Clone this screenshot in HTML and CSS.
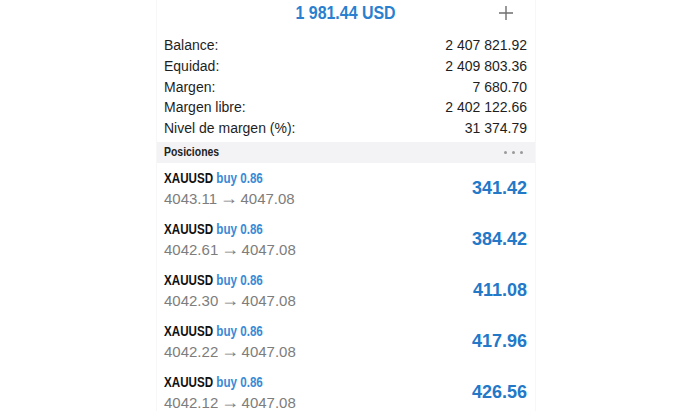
FILE: index.html
```html
<!DOCTYPE html>
<html lang="es">
<head>
<meta charset="utf-8">
<title>Operaciones</title>
<link rel="stylesheet" href="styles.css">
</head>
<body>
<div class="screen">
  <header class="top">
    <span class="spacer"></span>
    <h1 class="total">1 981.44 USD</h1>
    <span class="plus">
      <svg width="16" height="16" viewBox="0 0 16 16"><path d="M8 1V15M1 8H15" stroke="#6f6f6f" stroke-width="1.4" fill="none"/></svg>
    </span>
  </header>
  <section class="summary">
    <div class="srow"><span>Balance:</span><span>2 407 821.92</span></div>
    <div class="srow"><span>Equidad:</span><span>2 409 803.36</span></div>
    <div class="srow"><span>Margen:</span><span>7 680.70</span></div>
    <div class="srow"><span>Margen libre:</span><span>2 402 122.66</span></div>
    <div class="srow"><span>Nivel de margen (%):</span><span>31 374.79</span></div>
  </section>
  <div class="band">
    <span class="band-title">Posiciones</span>
    <span class="dots"><i></i><i></i><i></i></span>
  </div>
  <section class="positions">
    <div class="pos">
      <div class="pos-info">
        <div class="pos-title"><b>XAUUSD</b> <span class="side">buy 0.86</span></div>
        <div class="pos-price">4043.11 <span class="arrow">→</span> 4047.08</div>
      </div>
      <div class="pos-profit">341.42</div>
    </div>
    <div class="pos">
      <div class="pos-info">
        <div class="pos-title"><b>XAUUSD</b> <span class="side">buy 0.86</span></div>
        <div class="pos-price">4042.61 <span class="arrow">→</span> 4047.08</div>
      </div>
      <div class="pos-profit">384.42</div>
    </div>
    <div class="pos">
      <div class="pos-info">
        <div class="pos-title"><b>XAUUSD</b> <span class="side">buy 0.86</span></div>
        <div class="pos-price">4042.30 <span class="arrow">→</span> 4047.08</div>
      </div>
      <div class="pos-profit">411.08</div>
    </div>
    <div class="pos">
      <div class="pos-info">
        <div class="pos-title"><b>XAUUSD</b> <span class="side">buy 0.86</span></div>
        <div class="pos-price">4042.22 <span class="arrow">→</span> 4047.08</div>
      </div>
      <div class="pos-profit">417.96</div>
    </div>
    <div class="pos">
      <div class="pos-info">
        <div class="pos-title"><b>XAUUSD</b> <span class="side">buy 0.86</span></div>
        <div class="pos-price">4042.12 <span class="arrow">→</span> 4047.08</div>
      </div>
      <div class="pos-profit">426.56</div>
    </div>
  </section>
</div>
</body>
</html>
```

FILE: styles.css
```css
html, body {
  margin: 0;
  padding: 0;
  background: #ffffff;
}
body {
  font-family: "Liberation Sans", Arial, sans-serif;
  color: #1c1c1c;
  height: 411px;
  overflow: hidden;
}
.screen {
  width: 378px;
  margin-left: 156px;
  border-left: 1px solid #f7f7f7;
  border-right: 1px solid #f7f7f7;
  min-height: 411px;
}
.top {
  height: 25px;
  display: grid;
  grid-template-columns: 1fr auto 1fr;
  align-items: center;
  padding: 0 21px;
}
.total {
  margin: 0;
  font-family: "Liberation Sans", Arial, sans-serif;
  font-weight: bold;
  font-size: 18px;
  color: #2a7fcf;
  line-height: 24px;
  transform: scaleX(0.885);
  transform-origin: center;
}
.plus {
  justify-self: end;
  display: flex;
  align-items: center;
}
.summary {
  padding: 10px 8px 0 7px;
}
.srow {
  display: flex;
  justify-content: space-between;
  font-size: 14px;
  line-height: 20.75px;
  color: #1e1e1e;
}
.band {
  margin-top: 3px;
  height: 21px;
  background: #f3f3f5;
  display: flex;
  align-items: center;
  justify-content: space-between;
  padding: 0 12px 0 7px;
}
.band-title {
  display: inline-block;
  font-weight: bold;
  font-size: 12px;
  color: #222;
  transform: scaleX(0.87);
  transform-origin: left center;
}
.dots {
  display: flex;
  gap: 5px;
}
.dots i {
  width: 3px;
  height: 3px;
  border-radius: 50%;
  background: #9a9a9a;
}
.pos {
  display: flex;
  align-items: center;
  justify-content: space-between;
  padding: 5px 8px 4px 7px;
}
.pos-title {
  font-size: 14px;
  line-height: 20px;
  font-weight: bold;
  color: #111;
  transform: scaleX(0.83);
  transform-origin: left center;
}
.side {
  color: #3a8ad6;
}
.pos-price {
  font-size: 15px;
  line-height: 22px;
  color: #7d7d7d;
}
.arrow {
  font-size: 18px;
  line-height: 0;
  margin: 0 -1.5px;
}
.pos-profit {
  font-weight: bold;
  font-size: 18px;
  color: #2378c8;
}
```
